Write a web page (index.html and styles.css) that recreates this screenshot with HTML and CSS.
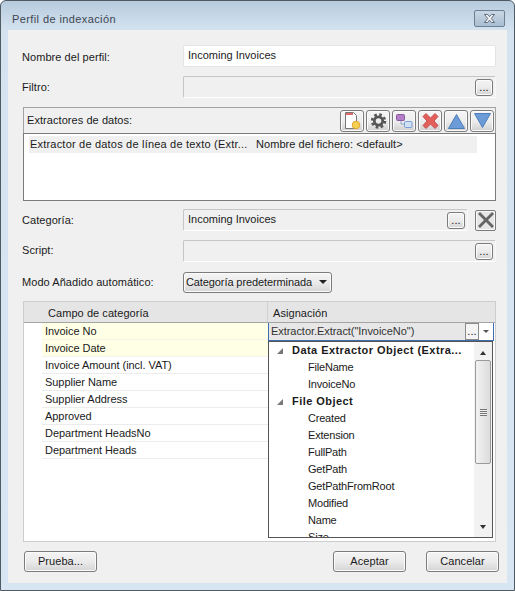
FILE: index.html
```html
<!DOCTYPE html>
<html lang="es">
<head>
<meta charset="utf-8">
<title>Perfil de indexación</title>
<link rel="stylesheet" href="styles.css">
</head>
<body>
<div class="window">
  <header class="titlebar">
    <span class="title">Perfil de indexación</span>
    <button class="close" aria-label="Cerrar"><svg width="13" height="11" viewBox="0 0 13 11"><path d="M1.5 1.5h3l2 2.2 2-2.2h3L8.2 5.5l3.3 4h-3l-2-2.4-2 2.4h-3l3.3-4z" fill="#f4f6f8" stroke="#5f6b78"/></svg></button>
  </header>
  <main class="content">
    <div class="row row-name">
      <label class="label">Nombre del perfil:</label>
      <div class="field field-edit">Incoming Invoices</div>
    </div>
    <div class="row row-filter">
      <label class="label">Filtro:</label>
      <div class="field field-ro"><button class="dots">...</button></div>
    </div>
    <section class="extractors">
      <div class="ext-head">
        <span class="ext-title">Extractores de datos:</span>
        <div class="tools">
          <button class="tool"><svg class="ico" viewBox="0 0 17 18"><path d="M1.500 .5h8l3 3v13h-11z" fill="#fff" stroke="#777"/><path d="M2 1h7v2H2z" fill="#e06a6a"/><circle cx="12" cy="13" r="3.800" fill="#f6cf55" stroke="#e0a732"/></svg></button>
          <button class="tool"><svg class="ico" viewBox="0 0 17 18"><circle cx="8.500" cy="9" r="4.200" fill="none" stroke="#555" stroke-width="2.800"/><circle cx="8.500" cy="9" r="6.500" fill="none" stroke="#555" stroke-width="2.400" stroke-dasharray="2.600 2.500"/></svg></button>
          <button class="tool"><svg class="ico" viewBox="0 0 17 18"><rect x=".5" y="2.500" width="8" height="6" rx="1" fill="#b57fc7" stroke="#8a5aa0"/><rect x="8.500" y="9.500" width="7.500" height="6" rx="1" fill="#cfe0f5" stroke="#7d9fd0"/><path d="M5 9v3h3" fill="none" stroke="#8fa6c8"/></svg></button>
          <button class="tool"><svg class="ico" viewBox="0 0 17 18"><path d="M4 1.500 8.500 6 13 1.500 16 4.500 12 9l4 4.500-3 3L8.500 12 4 16.500l-3-3L5 9 1 4.500z" fill="#e25f5c" stroke="#c65050" stroke-linejoin="round"/></svg></button>
          <button class="tool"><svg class="ico" viewBox="0 0 17 18"><path d="M8.500 2.500 16.500 16.500H.5z" fill="#6c9bd8" stroke="#4f7db8"/></svg></button>
          <button class="tool"><svg class="ico" viewBox="0 0 17 18"><path d="M8.500 15.500 16.500 1.500H.5z" fill="#6c9bd8" stroke="#4f7db8"/></svg></button>
        </div>
      </div>
      <div class="ext-list">
        <div class="ext-item"><span class="ext-name">Extractor de datos de línea de texto (Extr...</span><span>Nombre del fichero: &lt;default&gt;</span></div>
      </div>
    </section>
    <div class="row row-cat">
      <label class="label">Categoría:</label>
      <div class="field field-ro field-cat"><span class="cat-text">Incoming Invoices</span><button class="dots">...</button></div>
      <button class="clear" aria-label="Quitar"><svg width="18" height="18" viewBox="0 0 18 18"><path d="M3 1 9 7l6-6 2 2-6 6 6 6-2 2-6-6-6 6-2-2 6-6-6-6z" fill="#666"/></svg></button>
    </div>
    <div class="row row-script">
      <label class="label">Script:</label>
      <div class="field field-ro"><button class="dots">...</button></div>
    </div>
    <div class="row row-mode">
      <label class="label">Modo Añadido automático:</label>
      <button class="select"><span class="select-text">Categoría predeterminada</span><span class="caret"></span></button>
    </div>
    <section class="table">
      <div class="thead">
        <div class="th th-field">Campo de categoría</div>
        <div class="th th-map">Asignación</div>
      </div>
      <div class="tbody">
        <div class="col-fields">
          <div class="tr tr-on">Invoice No</div>
          <div class="tr tr-on">Invoice Date</div>
          <div class="tr">Invoice Amount (incl. VAT)</div>
          <div class="tr">Supplier Name</div>
          <div class="tr">Supplier Address</div>
          <div class="tr">Approved</div>
          <div class="tr">Department HeadsNo</div>
          <div class="tr">Department Heads</div>
        </div>
        <div class="col-map">
          <div class="editor">
            <span class="editor-text">Extractor.Extract("InvoiceNo")</span>
            <span class="editor-dots">...</span>
            <span class="editor-drop"><span class="caret caret-sm"></span></span>
          </div>
          <div class="popup">
            <div class="tree">
              <div class="node group"><i class="tri"></i>Data Extractor Object (Extra...</div>
              <div class="node">FileName</div>
              <div class="node">InvoiceNo</div>
              <div class="node group"><i class="tri"></i>File Object</div>
              <div class="node">Created</div>
              <div class="node">Extension</div>
              <div class="node">FullPath</div>
              <div class="node">GetPath</div>
              <div class="node">GetPathFromRoot</div>
              <div class="node">Modified</div>
              <div class="node">Name</div>
              <div class="node">Size</div>
            </div>
            <div class="scroll">
              <span class="arrow arrow-up"></span>
              <div class="thumb"><span class="grip"></span></div>
              <span class="arrow arrow-down"></span>
            </div>
          </div>
        </div>
      </div>
    </section>
    <footer class="actions">
      <button class="btn">Prueba...</button>
      <div class="actions-right">
        <button class="btn">Aceptar</button>
        <button class="btn">Cancelar</button>
      </div>
    </footer>
  </main>
</div>
</body>
</html>
```
FILE: styles.css
```css
* { box-sizing: border-box; }
html, body { margin: 0; padding: 0; background: #fff; }
body { width: 515px; height: 591px; overflow: hidden; font: 11px/15px "Liberation Sans", Arial, sans-serif; letter-spacing: .06px; color: #1a1a1a; }
button { font: inherit; color: inherit; letter-spacing: inherit; padding: 0; margin: 0; }

.window {
  width: 515px; height: 591px;
  border: 1px solid #505a63; border-radius: 6px 6px 0 0;
  background: linear-gradient(#b7cbde 0, #d5e3f0 30px, #d8e5f2 100%);
  padding: 0 7px 7px;
  display: flex; flex-direction: column;
}
.titlebar { height: 29px; flex: none; display: flex; align-items: center; justify-content: space-between; padding: 0 2px 0 4px; }
.title { color: #3c4650; letter-spacing: .4px; position: relative; top: 4px; }
.close { width: 31px; height: 17px; margin-top: 6px; border: 1px solid #6d7f92; border-radius: 2px; background: linear-gradient(#c9d7e4, #a9bed2); display: flex; align-items: center; justify-content: center; }

.content { flex: 1; background: #f0f0f0; padding: 15px 11px 0 15px; display: flex; flex-direction: column; position: relative; }

.row { display: flex; align-items: center; height: 22px; }
.label { width: 160px; flex: none; margin-left: -1px; }
.row-name .label { padding-top: 2px; }
.row-script .label { padding-bottom: 2px; }
.row-filter { margin-top: 9px; }
.field { height: 22px; flex: 1; margin-left: 1px; border-radius: 2px; }
.field-edit { background: #fff; border: 1px solid #e4e4e4; padding: 2px 4px; letter-spacing: 0; }
.field-ro { background: #f0f0f0; border: 1px solid; border-color: #c6c6c6 #f8f8f8 #fff #c6c6c6; display: flex; align-items: center; justify-content: flex-end; padding-right: 2px; }
.dots { width: 18px; height: 17px; border: 1px solid #7c7c7c; border-radius: 3px; background: linear-gradient(#f4f4f4 0, #ebebeb 50%, #d4d4d4 100%); box-shadow: inset 0 0 0 1px #fbfbfb; line-height: 14px; }

.extractors { margin-top: 9px; height: 94px; border: 1px solid #a2a2a2; display: flex; flex-direction: column; }
.ext-head { height: 25px; flex: none; display: flex; align-items: center; justify-content: space-between; padding-left: 3px; padding-right: 1px; }
.tools { display: flex; gap: 2px; align-items: center; }
.tool { width: 24px; height: 22px; border: 1px solid #7c7c7c; border-radius: 3px; background: linear-gradient(#f6f6f6 0, #ececec 55%, #cfcfcf 100%); box-shadow: inset 0 0 0 1px #fbfbfb; display: flex; align-items: center; justify-content: center; }
.ico { width: 17px; height: 18px; display: block; }
.ext-list { flex: 1; background: #fff; border: 1px solid #7b7b7b; margin: 0 -1px -1px; padding: 2px 18px 0 5px; }
.ext-item { background: #f0f0f0; height: 17px; line-height: 16px; padding-left: 1px; display: flex; }
.ext-name { width: 226px; flex: none; letter-spacing: .2px; }

.row-cat { margin-top: 8px; }
.field-cat { margin-right: 7px; justify-content: space-between; padding-left: 4px; }
.cat-text { position: relative; top: -1px; letter-spacing: 0; }
.clear { width: 21px; height: 21px; border: 1px solid #7c7c7c; border-radius: 2px; background: #e6e6e6; box-shadow: inset 0 0 0 1px #f8f8f8; display: flex; align-items: center; justify-content: center; }
.row-script { margin-top: 9px; }
.row-mode { margin-top: 9px; }
.select { width: 149px; height: 21px; flex: none; margin-left: 1px; border: 1px solid #7c7c7c; border-radius: 3px; background: linear-gradient(#f4f4f4 0, #ebebeb 50%, #d6d6d6 100%); box-shadow: inset 0 0 0 1px #fbfbfb; display: flex; align-items: center; justify-content: space-between; padding: 0 4px 0 2px; white-space: nowrap; }
.select-text { letter-spacing: -.1px; }
.caret { width: 0; height: 0; border-left: 4px solid transparent; border-right: 4px solid transparent; border-top: 4px solid #222; }
.caret-sm { border-left-width: 3px; border-right-width: 3px; border-top: 3px solid #555; }

.table { margin-top: 8px; height: 241px; background: #fff; border: 1px solid #cdcdcd; display: flex; flex-direction: column; }
.thead { height: 21px; flex: none; background: #e5e5e5; border-bottom: 1px solid #a4a4a4; display: flex; }
.th { line-height: 22px; }
.th-field { width: 244px; flex: none; padding-left: 24px; border-right: 1px solid #d0d0d0; }
.th-map { padding-left: 5px; }
.tbody { flex: 1; display: flex; min-height: 0; padding-left: 18px; }
.col-fields { width: 226px; flex: none; }
.tr { height: 17px; line-height: 16px; padding-left: 3px; border-bottom: 1px solid #ececec; letter-spacing: -.05px; }
.tr-on { background: #ffffe6; border-bottom-color: #f4f4ea; }
.col-map { width: 226px; flex: none; }
.editor { height: 18px; display: flex; align-items: center; background: #e7e7e7; border-left: 1px solid #3e6eb0; border-right: 1px solid #3e6eb0; border-bottom: 1px solid #3e6eb0; }
.editor-text { flex: 1; padding-left: 2px; color: #333; letter-spacing: -.05px; }
.editor-dots { width: 14px; height: 17px; background: #f4f4f4; border: 1px solid #8a8a8a; line-height: 14px; text-align: center; }
.editor-drop { width: 14px; height: 17px; background: #fff; display: flex; align-items: center; justify-content: center; }
.popup { height: 197px; width: 225px; background: #fff; border: 1px solid #555; display: flex; overflow: hidden; }
.tree { flex: 1; overflow: hidden; }
.node { height: 17px; line-height: 17px; padding-left: 39px; white-space: nowrap; letter-spacing: -.2px; }
.group { padding-left: 23px; font-weight: bold; position: relative; letter-spacing: .45px; }
.tri { position: absolute; left: 8px; top: 6px; width: 0; height: 0; border-left: 6px solid transparent; border-bottom: 6px solid #777; }
.scroll { width: 18px; flex: none; background: #f2f2f2; display: flex; flex-direction: column; align-items: center; padding: 9px 1px 0; }
.arrow { width: 0; height: 0; border-left: 3.500px solid transparent; border-right: 3.500px solid transparent; }
.arrow-up { border-bottom: 4px solid #333; }
.arrow-down { border-top: 4px solid #333; margin-top: 61px; }
.thumb { width: 16px; height: 104px; margin-top: 5px; background: linear-gradient(90deg, #f2f2f2, #dcdcdc); border: 1px solid #9b9b9b; border-radius: 2px; display: flex; align-items: center; justify-content: center; }
.grip { width: 7px; height: 7px; background: repeating-linear-gradient(#777 0 1px, #eee 1px 2px); }

.actions { margin-top: 9px; display: flex; justify-content: space-between; padding-left: 1px; margin-right: -3px; }
.actions-right { display: flex; gap: 20px; }
.btn { width: 73px; height: 21px; border: 1px solid #7c7c7c; border-radius: 3px; background: linear-gradient(#f4f4f4 0, #ebebeb 50%, #d4d4d4 100%); box-shadow: inset 0 0 0 1px #fbfbfb; }
```
